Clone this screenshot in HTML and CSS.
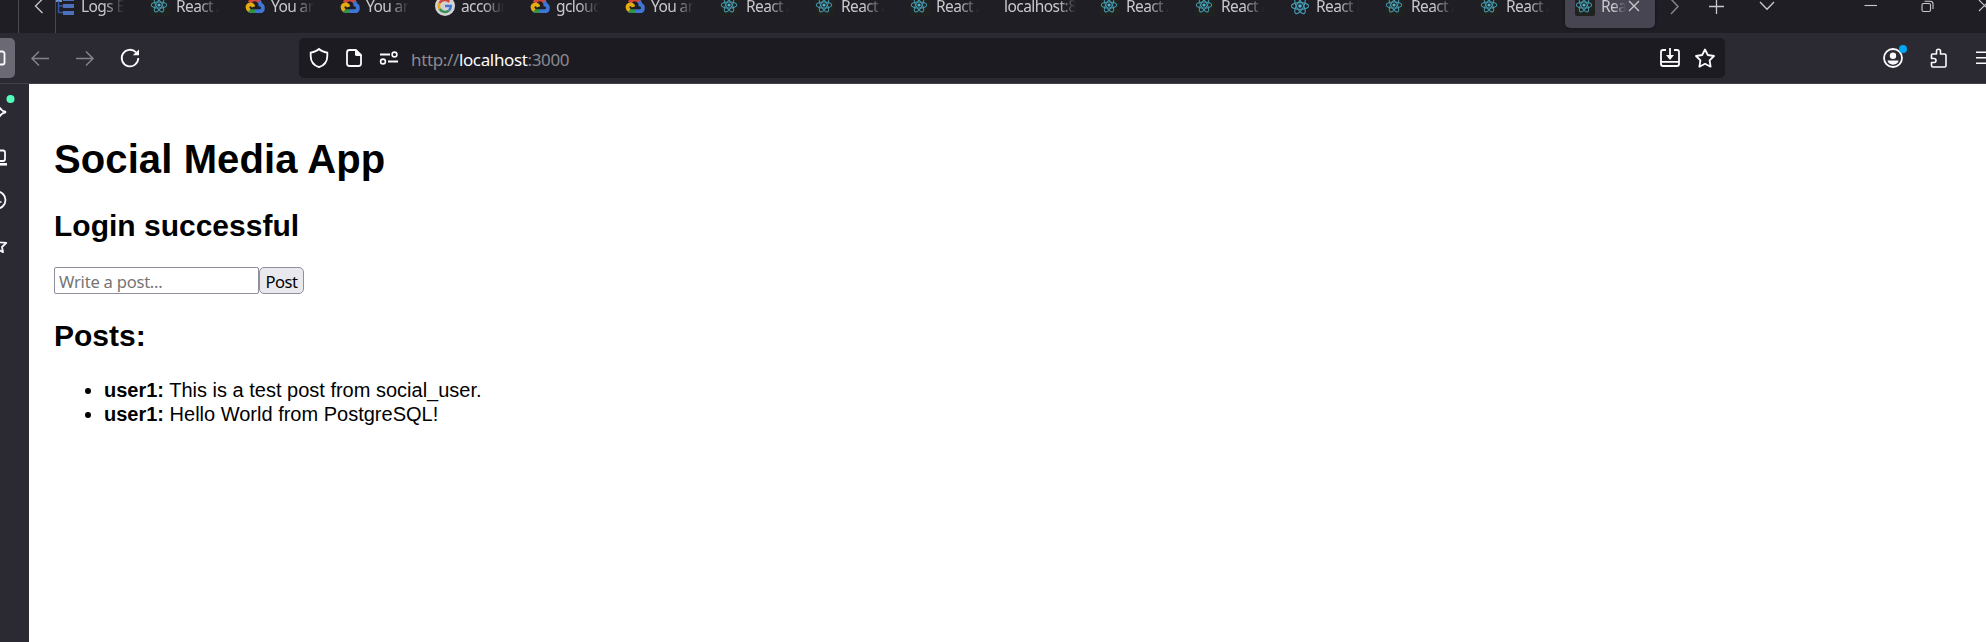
FILE: index.html
```html
<!DOCTYPE html>
<html lang="en">
<head>
<meta charset="utf-8">
<title>Social Media App</title>
<link rel="stylesheet" href="styles.css">
</head>
<body>
<svg class="defs" aria-hidden="true">
  <symbol id="react" viewBox="0 0 20 20">
    <g fill="none" stroke="#4397ae" stroke-width="1.15">
      <ellipse cx="10" cy="10" rx="8.6" ry="3.4"/>
      <ellipse cx="10" cy="10" rx="8.6" ry="3.4" transform="rotate(60 10 10)"/>
      <ellipse cx="10" cy="10" rx="8.6" ry="3.4" transform="rotate(120 10 10)"/>
    </g>
    <circle cx="10" cy="10" r="1.8" fill="#4db4cf"/>
  </symbol>
  <symbol id="cloud" viewBox="0 0 20 20">
    <g fill="none" stroke-width="3.8">
      <path d="M4.6 6.6A5.8 5.8 0 0 1 14.5 5.8" stroke="#d5473b"/>
      <path d="M14.2 5.4C15.2 6.8 15.3 7.7 15.3 8.6C18.9 9.6 18.7 15.2 14.8 15.2H10" stroke="#3f76d6"/>
      <path d="M10 15.2H5.4L3.8 14.6" stroke="#31924b"/>
      <path d="M4.4 14.4C1.2 12 2.4 8.4 5.6 8.4C7.2 8.4 8 9.4 8.5 10.8" stroke="#e2ac12"/>
    </g>
  </symbol>
</svg>
<div class="tabstrip">
  <div class="strip-start"></div>
  <div class="scroll-left"><svg width="10" height="16" viewBox="0 0 10 16"><path d="M8.5 1L1.500 8L8.500 15" class="line light"/></svg></div>
  <div class="tabs">
    <div class="tab"><svg class="fav" viewBox="0 0 20 20"><path d="M1 0H7V6H1Z" fill="#7292c9"/><path d="M3.500 5V16.500H9M3.500 10H9" fill="none" stroke="#3155a0" stroke-width="1.6"/><path d="M8 1H19V5H8ZM8 8H19V12H8ZM8 15H19V19H8Z" fill="#4d70bd"/></svg><span class="label">Logs E</span></div>
    <div class="tab"><svg class="fav boxed"><use href="#react"/></svg><span class="label">React A</span></div>
    <div class="tab"><svg class="fav"><use href="#cloud"/></svg><span class="label">You ar</span></div>
    <div class="tab"><svg class="fav"><use href="#cloud"/></svg><span class="label">You ar</span></div>
    <div class="tab"><svg class="fav" viewBox="0 0 20 20"><circle cx="10" cy="10" r="10" fill="#d2d2d4"/><g fill="none" stroke-width="2.5"><path d="M4.600 7A6 6 0 0 1 14.200 5.800" stroke="#d5473b"/><path d="M4.800 13A6 6 0 0 1 4.600 7" stroke="#e2ac12"/><path d="M13.800 14.600A6 6 0 0 1 4.800 13" stroke="#31924b"/><path d="M10 10H15.800Q15.800 13 13.800 14.600" stroke="#3f76d6"/></g></svg><span class="label">accour</span></div>
    <div class="tab"><svg class="fav"><use href="#cloud"/></svg><span class="label">gclouc</span></div>
    <div class="tab"><svg class="fav"><use href="#cloud"/></svg><span class="label">You ar</span></div>
    <div class="tab"><svg class="fav boxed"><use href="#react"/></svg><span class="label">React A</span></div>
    <div class="tab"><svg class="fav boxed"><use href="#react"/></svg><span class="label">React A</span></div>
    <div class="tab"><svg class="fav boxed"><use href="#react"/></svg><span class="label">React A</span></div>
    <div class="tab"><span class="label wide">localhost:8</span></div>
    <div class="tab"><svg class="fav boxed"><use href="#react"/></svg><span class="label">React A</span></div>
    <div class="tab"><svg class="fav boxed"><use href="#react"/></svg><span class="label">React A</span></div>
    <div class="tab"><svg class="fav"><use href="#react"/></svg><span class="label">React L</span></div>
    <div class="tab"><svg class="fav boxed"><use href="#react"/></svg><span class="label">React A</span></div>
    <div class="tab"><svg class="fav boxed"><use href="#react"/></svg><span class="label">React A</span></div>
    <div class="tab active"><svg class="fav boxed"><use href="#react"/></svg><span class="label short">Rea</span><svg class="close" width="12" height="12" viewBox="0 0 12 12"><path d="M1 1L11 11M11 1L1 11" class="line light"/></svg></div>
  </div>
  <svg class="strip-icons" width="326" height="33" viewBox="1660 0 326 33">
    <path d="M1671 -1L1678 6.500L1671 14" class="line dim"/>
    <path d="M1709 6.500H1724M1716.500 -1V14" class="line light"/>
    <path d="M1760 2L1767 9.300L1774 2" class="line light"/>
    <path d="M1864.500 5.500H1877" class="line light thin"/>
    <rect x="1922" y="3.500" width="8.500" height="8" rx="1.500" class="line light thin"/>
    <path d="M1924.500 1.300H1930Q1933 1.300 1933 4V9" class="line light thin"/>
    <path d="M1979 0L1990 11M1979 11L1990 0" class="line light thin"/>
  </svg>
</div>
<div class="toolbar">
  <div class="side-toggle"><svg width="15" height="40" viewBox="0 0 15 40"><rect x="-12" y="13.500" width="16.500" height="13" rx="2" class="line white bold"/></svg></div>
  <svg class="nav" width="284" height="40" viewBox="15 38 284 40">
    <path d="M49 58.500H32M39 51.500L32 58.500L39 65.500" class="line dim"/>
    <path d="M76 58.500H93M86 51.500L93 58.500L86 65.500" class="line dim"/>
    <path d="M136 52.300A8.300 8.300 0 1 0 138.300 58" class="line white bold"/>
    <path d="M139 49.500V55.200H132.800Z" fill="#fbfbfe"/>
  </svg>
  <div class="urlbar">
    <svg width="112" height="40" viewBox="299 38 112 40">
      <path d="M319 49C321.500 51.500 324 52 327.300 52.600V56C327.300 61.500 324 65.500 319 67.200C314 65.500 310.700 61.500 310.700 56V52.600C314 52 316.500 51.500 319 49Z" class="line white bold"/>
      <path d="M356 50H349.500Q347 50 347 52.500V63.500Q347 66 349.500 66H358.500Q361 66 361 63.500V55" class="line white bold"/>
      <path d="M355 49.200H356.500L361.800 54.500V56H356.500Q355 56 355 54.500Z" fill="#fbfbfe"/>
      <path d="M380 54.500H390M388 61.500H398" class="line white bold"/>
      <circle cx="394.500" cy="54.500" r="2.400" class="line white mid"/><circle cx="383" cy="61.500" r="2.400" class="line white mid"/>
    </svg>
    <div class="url">http://<b>localhost</b>:3000</div>
    <svg width="75" height="40" viewBox="1650 38 75 40">
      <path d="M1666 50H1663Q1661 50 1661 52V64Q1661 66 1663 66H1677Q1679 66 1679 64V52Q1679 50 1677 50H1674M1661 61.800H1679M1670 48V58" class="line white bold"/>
      <path d="M1666 55H1674L1670 60Z" fill="#fbfbfe"/>
      <path d="M1705 49.500L1707.800 55L1714 56L1709.600 60.400L1710.600 66.700L1705 63.800L1699.400 66.700L1700.400 60.400L1696 56L1702.200 55Z" class="line white bold round"/>
    </svg>
  </div>
  <svg width="111" height="40" viewBox="1875 38 111 40">
    <circle cx="1893" cy="58" r="9" class="line white bold"/>
    <circle cx="1893" cy="55.800" r="3.200" fill="#fbfbfe"/>
    <path d="M1887.500 60.500H1898.500C1898 66 1888 66 1887.500 60.500Z" fill="#fbfbfe"/>
    <circle cx="1903" cy="49" r="4" fill="#00a7f5"/>
    <path d="M1932.500 54H1936.500V51.200A2 2 0 0 1 1940.500 51.200V54H1944.500Q1946 54 1946 55.500V65.500Q1946 67 1944.500 67H1933Q1931.500 67 1931.500 65.500V62.500H1934A2 2 0 0 0 1934 58.500H1931.500V55Q1931.500 54 1932.500 54Z" class="line white mid round"/>
    <path d="M1976 52.200H1990M1976 57.700H1990M1976 63.200H1990" class="line white mid"/>
  </svg>
</div>
<div class="main">
  <svg class="sidebar" width="29" height="558" viewBox="0 84 29 558">
    <circle cx="10.500" cy="99" r="4" fill="#54ffbd"/>
    <path d="M-2 104Q-0.500 110.500 6 112Q-0.500 113.500 -2 120" class="line white bold"/>
    <path d="M0 150.500H3Q5 150.500 5 152.500V159Q5 161 3 161H0" class="line white bold"/>
    <path d="M-1 164.300H7" class="line white heavy"/>
    <circle cx="-3" cy="200" r="8.500" class="line white bold"/><path d="M0 202H1.500" class="line white"/>
    <path d="M-3 241L0 242.300L6.300 242.800L2 247L3 252.200L-2 249.500" class="line white bold round"/>
  </svg>
  <div class="page">
    <h1>Social Media App</h1>
    <h2>Login successful</h2>
    <div class="form"><input type="text" placeholder="Write a post..."><button>Post</button></div>
    <h2>Posts:</h2>
    <ul>
      <li><strong>user1:</strong> This is a test post from social_user.</li>
      <li><strong>user1:</strong> Hello World from PostgreSQL!</li>
    </ul>
  </div>
</div>
</body>
</html>
```
FILE: styles.css
```css
body { margin: 0; height: 642px; overflow: hidden; display: flex; flex-direction: column; background: #2b2a33; }
svg { display: block; flex: none; }
.defs { position: absolute; width: 0; height: 0; }
.line { fill: none; stroke-width: 1.3; }
.light { stroke: #c9c9cd; }
.dim { stroke: #84838b; stroke-width: 1.5; }
.white { stroke: #fbfbfe; }
.bold { stroke-width: 1.8; }
.heavy { stroke-width: 2.6; }
.mid { stroke-width: 1.6; }
.thin { stroke-width: 1.1; }
.round { stroke-linejoin: round; }

.tabstrip { display: flex; height: 33px; flex: none; background: #1f1e25; overflow: hidden; }
.strip-start { box-sizing: border-box; width: 19px; border-right: 1px solid #4a4950; }
.scroll-left { box-sizing: border-box; width: 37px; padding-left: 15px; border-right: 1px solid #4a4950; }
.scroll-left svg { margin-top: -2px; }
.tabs { display: flex; width: 1605px; margin-left: -1px; flex: none; }
.tab { display: flex; width: 95px; height: 28px; flex: none; }
.fav { width: 20px; height: 20px; margin-top: -4px; }
.boxed { background: #20221f; border-radius: 2px; padding: 0 2px 2px 0; box-sizing: border-box; }
.label { width: 45px; margin: -6px 0 0 6px; font: 15.5px/25px "Noto Sans", "Open Sans", sans-serif; letter-spacing: -0.6px; color: #c9c9cd; white-space: nowrap; mask-image: linear-gradient(to right, #000 50%, transparent 96%); }
.wide { width: 72px; margin-left: -1px; letter-spacing: -0.55px; mask-image: linear-gradient(to right, #000 75%, transparent); }
.short { width: 26px; }
.active { box-sizing: border-box; width: 90px; padding-left: 10px; margin-left: -10px; background: #474551; border-radius: 0 0 5px 5px; box-shadow: 0 0 3px #111; }
.close { margin: 0 0 0 1px; }

.toolbar { box-sizing: border-box; display: flex; height: 51px; flex: none; padding-top: 5px; border-bottom: 1px solid #42414a; background: #2b2a33; }
.side-toggle { width: 15px; height: 40px; background: #6b6974; border-radius: 0 5px 5px 0; overflow: hidden; }
.urlbar { display: flex; justify-content: space-between; width: 1426px; height: 40px; margin-right: 150px; background: #1c1b22; border-radius: 5px; }
.url { flex: 1; font: 17px/43px "Noto Sans", "Open Sans", sans-serif; letter-spacing: -0.36px; color: #8b8a91; }
.url b { font-weight: 400; color: #fbfbfe; }

.main { display: flex; flex: 1; min-height: 0; }
.page { flex: 1; padding: 25px; background: #fff; font: 20px/24px "Liberation Sans", Arial, sans-serif; color: #000; }
h1 { margin: 27px 0; font-size: 40px; line-height: 46px; letter-spacing: 0.1px; }
h2 { margin: 25px 0 24px; font-size: 30px; line-height: 34px; }
.form { display: flex; height: 27px; }
input, button { box-sizing: border-box; height: 27px; margin: 0; border: 1px solid #8f8f9d; font: 16.6px/21px "Noto Sans", "Open Sans", sans-serif; letter-spacing: -0.25px; }
input { width: 205px; padding: 2px 4px 1px; border-radius: 2px; }
input::placeholder { color: #757575; }
button { width: 45px; padding: 2px 0 1px; border-radius: 5px; background: #e9e9ed; color: #000; letter-spacing: -0.5px; }
ul { margin: 25px 0; padding-left: 50px; }
```
